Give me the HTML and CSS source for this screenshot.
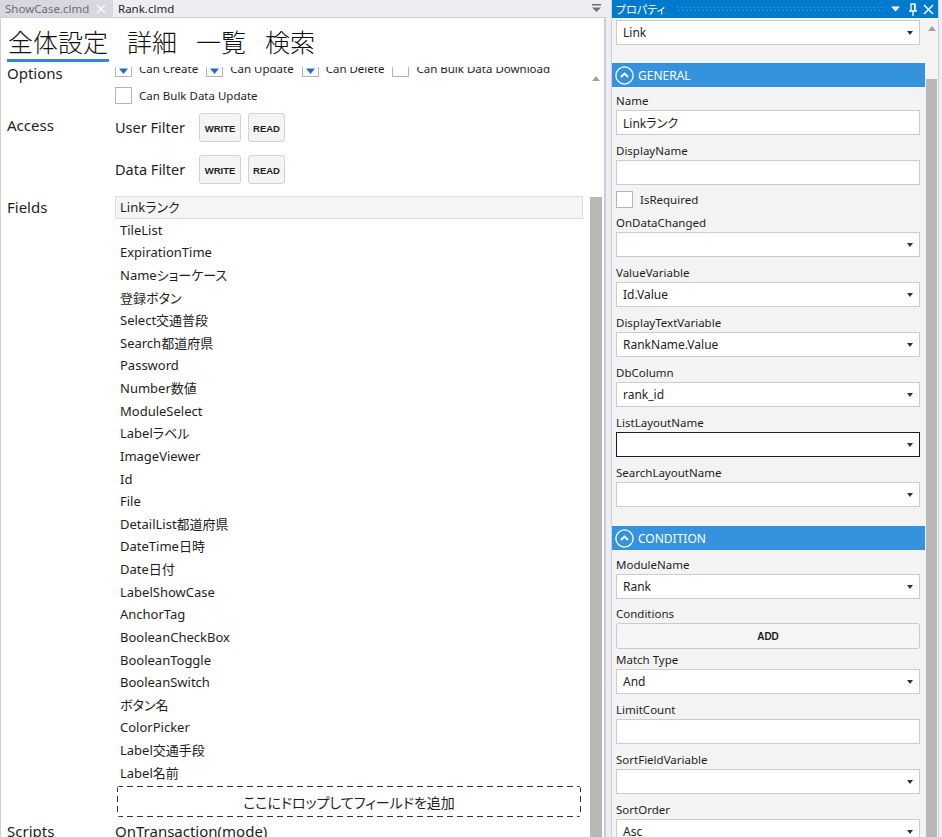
FILE: index.html
```html
<!DOCTYPE html>
<html lang="ja">
<head>
<meta charset="utf-8">
<title>Rank.clmd</title>
<link rel="stylesheet" href="styles.css">
</head>
<body>
<div class="app">
  <div class="doc">
    <div class="tabstrip">
      <div class="tab tab-inactive">
        <span>ShowCase.clmd</span>
        <svg class="tab-close" width="10" height="10" viewBox="0 0 10 10"><path d="M1 1L9 9M9 1L1 9" stroke="#f7f7f9" stroke-width="1.6"/></svg>
      </div>
      <div class="tab tab-active">Rank.clmd</div>
      <div class="tab-spacer"></div>
      <svg class="tab-menu" width="9" height="8" viewBox="0 0 9 8"><rect x="0" y="0" width="9" height="1.5" fill="#717171"/><path d="M0 3.5H9L4.5 8Z" fill="#717171"/></svg>
    </div>
    <div class="docbody">
      <div class="pagetabs">
        <span class="pagetab selected">全体設定</span>
        <span class="pagetab">詳細</span>
        <span class="pagetab">一覧</span>
        <span class="pagetab">検索</span>
      </div>
      <div class="viewport">
        <div class="content">
          <div class="section sec-options">
            <div class="sec-label">Options</div>
            <div class="sec-body rows-10">
              <div class="check-row">
                <span class="check"><span class="box"><svg width="15" height="15" viewBox="0 0 15 15"><path d="M3 7.5H12L7.5 13Z" fill="#1c6cc7"/></svg></span><span>Can Create</span></span>
                <span class="check"><span class="box"><svg width="15" height="15" viewBox="0 0 15 15"><path d="M3 7.5H12L7.5 13Z" fill="#1c6cc7"/></svg></span><span>Can Update</span></span>
                <span class="check"><span class="box"><svg width="15" height="15" viewBox="0 0 15 15"><path d="M3 7.5H12L7.5 13Z" fill="#1c6cc7"/></svg></span><span>Can Delete</span></span>
                <span class="check"><span class="box"></span><span>Can Bulk Data Download</span></span>
              </div>
              <div class="check-row">
                <span class="check"><span class="box"></span><span>Can Bulk Data Update</span></span>
              </div>
            </div>
          </div>
          <div class="section sec-access">
            <div class="sec-label">Access</div>
            <div class="sec-body rows-13">
              <div class="filter-row"><span class="filter-name">User Filter</span><span class="mini-btn btn-write">WRITE</span><span class="mini-btn btn-read">READ</span></div>
              <div class="filter-row"><span class="filter-name">Data Filter</span><span class="mini-btn btn-write">WRITE</span><span class="mini-btn btn-read">READ</span></div>
            </div>
          </div>
          <div class="section sec-fields">
            <div class="sec-label">Fields</div>
            <div class="sec-body">
              <ul class="field-list">
                <li class="selected">Linkランク</li>
                <li>TileList</li>
                <li>ExpirationTime</li>
                <li>Nameショーケース</li>
                <li>登録ボタン</li>
                <li>Select交通普段</li>
                <li>Search都道府県</li>
                <li>Password</li>
                <li>Number数値</li>
                <li>ModuleSelect</li>
                <li>Labelラベル</li>
                <li>ImageViewer</li>
                <li>Id</li>
                <li>File</li>
                <li>DetailList都道府県</li>
                <li>DateTime日時</li>
                <li>Date日付</li>
                <li>LabelShowCase</li>
                <li>AnchorTag</li>
                <li>BooleanCheckBox</li>
                <li>BooleanToggle</li>
                <li>BooleanSwitch</li>
                <li>ボタン名</li>
                <li>ColorPicker</li>
                <li>Label交通手段</li>
                <li>Label名前</li>
              </ul>
              <div class="dropzone">ここにドロップしてフィールドを追加</div>
            </div>
          </div>
          <div class="section sec-scripts">
            <div class="sec-label">Scripts</div>
            <div class="sec-body scripts-text">OnTransaction(mode)</div>
          </div>
        </div>
        <div class="scrollbar doc-sb">
          <span class="sb-up"></span>
          <span class="sb-thumb"></span>
        </div>
      </div>
    </div>
  </div>

  <div class="panel">
    <div class="panel-header">
      <span class="panel-title">プロパティ</span>
      <span class="grip"></span>
      <svg class="hdr-icon hdr-menu" width="9" height="6" viewBox="0 0 9 6"><path d="M0 0.5H9L4.5 5.5Z" fill="#fff"/></svg>
      <svg class="hdr-icon hdr-pin" width="10" height="13" viewBox="0 0 10 13"><path d="M3 1V8M7 1V8M2.5 1H7.5M1 8H9M5 8V13" stroke="#fff" stroke-width="1.3" fill="none"/><rect x="6" y="1" width="1.6" height="7" fill="#fff"/></svg>
      <svg class="hdr-icon hdr-close" width="11" height="11" viewBox="0 0 11 11"><path d="M1 1L10 10M10 1L1 10" stroke="#fff" stroke-width="1.5"/></svg>
    </div>
    <div class="panel-body">
      <div class="panel-content">
        <div class="pfield first"><div class="combo">Link<i class="caret"></i></div></div>

        <div class="group-header">
          <svg width="19" height="19" viewBox="0 0 19 19"><circle cx="9.5" cy="9.5" r="8.6" stroke="#fff" stroke-width="1.3" fill="none"/><path d="M6 11L9.5 7.5L13 11" stroke="#fff" stroke-width="1.8" fill="none"/></svg>
          <span>GENERAL</span>
        </div>
        <div class="group-fields">
          <div class="pfield"><div class="plabel">Name</div><div class="textbox">Linkランク</div></div>
          <div class="pfield before-check"><div class="plabel">DisplayName</div><div class="textbox"></div></div>
          <div class="pcheck"><span class="box"></span><span>IsRequired</span></div>
          <div class="pfield"><div class="plabel">OnDataChanged</div><div class="combo"><i class="caret"></i></div></div>
          <div class="pfield"><div class="plabel">ValueVariable</div><div class="combo">Id.Value<i class="caret"></i></div></div>
          <div class="pfield"><div class="plabel">DisplayTextVariable</div><div class="combo">RankName.Value<i class="caret"></i></div></div>
          <div class="pfield"><div class="plabel">DbColumn</div><div class="combo">rank_id<i class="caret"></i></div></div>
          <div class="pfield"><div class="plabel">ListLayoutName</div><div class="combo focused"><i class="caret"></i></div></div>
          <div class="pfield"><div class="plabel">SearchLayoutName</div><div class="combo"><i class="caret"></i></div></div>
        </div>

        <div class="group-header second">
          <svg width="19" height="19" viewBox="0 0 19 19"><circle cx="9.5" cy="9.5" r="8.6" stroke="#fff" stroke-width="1.3" fill="none"/><path d="M6 11L9.5 7.5L13 11" stroke="#fff" stroke-width="1.8" fill="none"/></svg>
          <span>CONDITION</span>
        </div>
        <div class="group-fields second-fields">
          <div class="pfield module"><div class="plabel">ModuleName</div><div class="combo">Rank<i class="caret"></i></div></div>
          <div class="pfield conditions"><div class="plabel">Conditions</div><div class="add-btn">ADD</div></div>
          <div class="pfield"><div class="plabel">Match Type</div><div class="combo">And<i class="caret"></i></div></div>
          <div class="pfield"><div class="plabel">LimitCount</div><div class="textbox"></div></div>
          <div class="pfield"><div class="plabel">SortFieldVariable</div><div class="combo"><i class="caret"></i></div></div>
          <div class="pfield"><div class="plabel">SortOrder</div><div class="combo">Asc<i class="caret"></i></div></div>
        </div>
      </div>
      <div class="scrollbar panel-sb">
        <span class="sb-up"></span>
        <span class="sb-thumb"></span>
      </div>
    </div>
  </div>
</div>
</body>
</html>
```

FILE: styles.css
```css
* { box-sizing: border-box; }
html, body { margin: 0; padding: 0; }
body {
  width: 942px;
  height: 837px;
  overflow: hidden;
  background: #eeeef2;
  font-family: "Noto Sans", "Noto Sans CJK JP", sans-serif;
  font-feature-settings: "palt";
  color: #1e1e1e;
}
.app { display: flex; height: 837px; }

/* ---------- document ---------- */
.doc { width: 606px; flex: none; display: flex; flex-direction: column; }
.tabstrip { height: 17px; display: flex; font-size: 11.5px; line-height: 17px; flex: none; }
.tab { display: flex; align-items: center; padding: 0 5px; white-space: nowrap; }
.tab-inactive { width: 113px; background: #d6d7e1; color: #6e6e6e; }
.tab-close { margin-left: auto; margin-right: 2px; }
.tab-active { color: #1e1e1e; }
.tab-spacer { flex: 1; }
.tab-menu { margin: 4px 5px 0 0; }

.docbody {
  flex: 1;
  display: flex;
  flex-direction: column;
  background: #fff;
  border-top: 1px solid #cccedb;
  border-left: 1px solid #cccedb;
  border-right: 2px solid #cccedb;
  min-height: 0;
}
.pagetabs { display: flex; padding: 5px 0 0 6px; height: 49px; flex: none; font-family: "Noto Sans CJK JP", sans-serif; }
.pagetab { font-size: 25px; font-weight: 300; color: #111; line-height: 36px; margin-right: 17px; padding: 0 1px; height: 39px; }
.pagetab.selected { border-bottom: 3px solid #2f88d6; }

.viewport { flex: 1; display: flex; overflow: hidden; min-height: 0; }
.content { flex: 1; margin-top: -7px; display: flex; flex-direction: column; }

.section { display: grid; grid-template-columns: 114px 1fr; }
.sec-body { display: flex; flex-direction: column; }
.rows-10 { gap: 10px; }
.rows-13 { gap: 13px; }
.sec-label { padding-left: 6px; font-size: 15px; line-height: 20px; }
.sec-options .sec-label { padding-top: 3px; }
.sec-access { margin-top: 9px; }
.sec-access .sec-label { padding-top: 2px; }
.sec-fields { margin-top: 12px; }
.sec-fields .sec-label { padding-top: 1px; }
.sec-scripts { margin-top: 4px; }
.scripts-text { font-size: 15px; line-height: 20px; display: block; }

.check-row { display: flex; height: 17px; align-items: center; font-size: 11.5px; }
.check { display: flex; align-items: center; margin-right: 8px; white-space: nowrap; }
.box { width: 17px; height: 17px; border: 1px solid #b5b5b5; background: #fff; margin-right: 7px; display: block; flex: none; }
.box svg { display: block; }

.filter-row { display: flex; align-items: center; height: 29px; }
.filter-name { width: 84px; font-size: 14.5px; padding-bottom: 2px; }
.mini-btn {
  height: 29px;
  display: flex;
  align-items: center;
  justify-content: center;
  border: 1px solid #d2d2d2;
  border-radius: 3px;
  background: #f4f4f4;
  font-family: "Liberation Sans", sans-serif;
  font-weight: bold;
  font-size: 9.5px;
  padding-top: 2px;
}
.btn-write { width: 42px; margin-right: 7px; }
.btn-read { width: 37px; }

.field-list { list-style: none; margin: 0; padding: 0; width: 468px; font-size: 13px; }
.field-list li { height: 22.64px; line-height: 22px; padding-left: 5px; white-space: nowrap; }
.field-list li.selected { background: #f5f5f5; border: 1px solid #dcdcdc; padding-left: 4px; line-height: 20px; }

.dropzone {
  margin: 2px 0 0 2px;
  width: 464px;
  height: 31px;
  display: flex;
  align-items: center;
  justify-content: center;
  font-size: 14px;
  border-radius: 3px;
  background:
    linear-gradient(90deg, #333 60%, transparent 0) 0 0 / 10px 1px repeat-x,
    linear-gradient(90deg, #333 60%, transparent 0) 0 100% / 10px 1px repeat-x,
    linear-gradient(180deg, #333 60%, transparent 0) 0 0 / 1px 10px repeat-y,
    linear-gradient(180deg, #333 60%, transparent 0) 100% 0 / 1px 10px repeat-y;
}

.scrollbar { display: flex; flex-direction: column; align-items: stretch; flex: none; }
.sb-up {
  display: block;
  align-self: center;
  width: 0; height: 0;
  border-left: 4.5px solid transparent;
  border-right: 4.5px solid transparent;
  border-bottom: 5px solid #a2a2a2;
}
.sb-thumb { display: block; flex: 1; background: #b8b8b8; }
.doc-sb { width: 15px; padding: 9px 2px 0 1px; }
.doc-sb .sb-thumb { margin-top: 116px; }

/* ---------- properties panel ---------- */
.panel {
  width: 328px;
  flex: none;
  margin-left: 5px;
  display: flex;
  flex-direction: column;
  border-left: 1px solid #cccedb;
  border-right: 1px solid #cccedb;
}
.panel-header {
  height: 18px;
  flex: none;
  background: #007acc;
  color: #fff;
  display: flex;
  align-items: center;
  padding: 0 4px 0 4px;
}
.panel-title { font-size: 11px; font-family: "Noto Sans CJK JP", sans-serif; line-height: 18px; }
.grip {
  flex: 1;
  height: 4px;
  margin: 0 7px 0 12px;
  background:
    linear-gradient(90deg, #5aa6e0 1px, transparent 1px) 0 0 / 4px 1px repeat-x,
    linear-gradient(90deg, #5aa6e0 1px, transparent 1px) 2px 3px / 4px 1px repeat-x;
}
.hdr-icon { display: block; flex: none; }
.hdr-pin { margin-left: 8px; }
.hdr-close { margin-left: 5px; }

.panel-body { flex: 1; display: flex; background: #f3f3f3; min-height: 0; overflow: hidden; }
.panel-content { width: 313px; flex: none; font-size: 11.5px; display: flex; flex-direction: column; }
.panel-sb { width: 13px; padding: 8px 1px 0 1px; }
.panel-sb .sb-thumb { margin-top: 48px; }

.group-fields { display: flex; flex-direction: column; padding-top: 6px; }
.second-fields { padding-top: 7px; }
.pfield { padding: 0 5px 0 4px; margin-bottom: 8px; flex: none; }
.pfield.first { padding-top: 2px; margin-bottom: 18px; }
.pfield.before-check { margin-bottom: 6px; }
.pfield.module { margin-bottom: 7px; }
.pfield.conditions { margin-bottom: 3px; }
.plabel { height: 17px; line-height: 15px; white-space: nowrap; }

.combo, .textbox {
  height: 25px;
  background: #fff;
  border: 1px solid #cccccc;
  display: flex;
  align-items: center;
  padding: 0 6px 0 6px;
  white-space: nowrap;
  font-size: 12px;
}
.combo.focused { border-color: #1e1e1e; }
.caret {
  margin-left: auto;
  width: 0; height: 0;
  border-left: 3.5px solid transparent;
  border-right: 3.5px solid transparent;
  border-top: 4px solid #333;
}
.add-btn {
  height: 26px;
  border: 1px solid #cacaca;
  border-radius: 3px;
  background: #f5f5f5;
  display: flex;
  align-items: center;
  justify-content: center;
  font-family: "Liberation Sans", sans-serif;
  font-weight: bold;
  font-size: 10px;
}
.pcheck { display: flex; align-items: center; height: 17px; padding-left: 4px; margin-bottom: 7px; flex: none; }

.group-header {
  height: 24px;
  flex: none;
  background: #3592dc;
  color: #fff;
  display: flex;
  align-items: center;
  padding-left: 3px;
  font-size: 12px;
}
.group-header svg { display: block; margin-right: 4px; }
.group-header.second { margin-top: 11px; }
```
